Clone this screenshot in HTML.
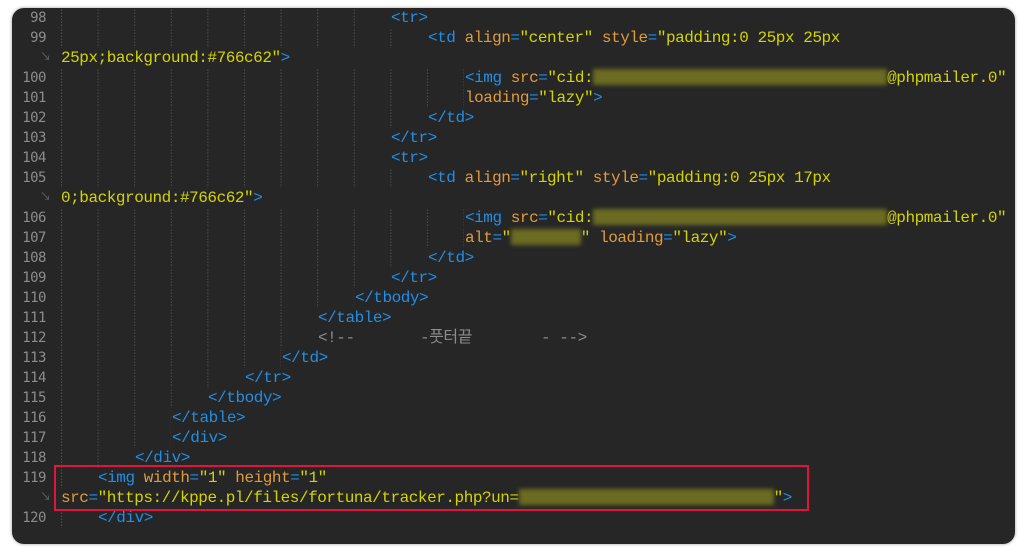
<!DOCTYPE html>
<html><head><meta charset="utf-8"><style>
html,body{margin:0;padding:0;background:#fff;width:1025px;height:551px;overflow:hidden}
.panel{position:absolute;left:12px;top:8px;width:1003px;height:536px;background:#262626;border-radius:12px;box-shadow:0 0 3px rgba(0,0,0,.4)}
.r{position:absolute;left:0;height:20px;line-height:20px;font-family:"Liberation Mono","Noto Sans CJK KR",monospace;font-size:16px;letter-spacing:-0.45px;white-space:pre;color:#d4d400}
.n{position:absolute;left:0;width:46px;text-align:right;color:#8c8c8c;font-family:"DejaVu Sans Mono",monospace;font-size:14px;letter-spacing:-0.5px}
.w{position:absolute;left:40px;color:#666;font-size:11px;letter-spacing:0}
.c{position:absolute;left:61px}
.g{position:absolute;left:61px;top:0;height:20px;background-image:linear-gradient(to bottom,#262626 50%,transparent 50%),linear-gradient(to right,#4e4e4e 1px,transparent 1px);background-size:100% 3px,36.6px 100%}
.t{color:#1f8fe8}.a{color:#e29a3a}.s{color:#d4d400}.m{color:#8c8c8c}
.b{display:inline-block;height:16px;vertical-align:-3px;background:#6b6b22;filter:blur(2px)}
.box{position:absolute;left:54px;top:465px;width:751px;height:42px;border:2px solid #e0143c}
</style></head><body>
<div class="panel"></div>

<div class="r" style="top:8px;width:1025px"><span class="n">98</span><div class="g" style="width:329px"></div><span class="c" style="left:391px"><span class="t">&lt;tr&gt;</span></span></div>
<div class="r" style="top:28px;width:1025px"><span class="n">99</span><div class="g" style="width:366px"></div><span class="c" style="left:428px"><span class="t">&lt;td </span><span class="a">align</span><span class="t">=</span>"center" <span class="a">style</span><span class="t">=</span>"padding:0 25px 25px</span></div>
<div class="r" style="top:48px;width:1025px"><span class="w">↘</span><span class="c">25px;background:#766c62"<span class="t">&gt;</span></span></div>
<div class="r" style="top:68px;width:1025px"><span class="n">100</span><div class="g" style="width:403px"></div><span class="c" style="left:465px"><span class="t">&lt;img </span><span class="a">src</span><span class="t">=</span>"cid:<span class="b" style="width:294px"></span>@phpmailer.0"</span></div>
<div class="r" style="top:88px;width:1025px"><span class="n">101</span><div class="g" style="width:403px"></div><span class="c" style="left:465px"><span class="a">loading</span><span class="t">=</span>"lazy"<span class="t">&gt;</span></span></div>
<div class="r" style="top:108px;width:1025px"><span class="n">102</span><div class="g" style="width:366px"></div><span class="c" style="left:428px"><span class="t">&lt;/td&gt;</span></span></div>
<div class="r" style="top:128px;width:1025px"><span class="n">103</span><div class="g" style="width:329px"></div><span class="c" style="left:391px"><span class="t">&lt;/tr&gt;</span></span></div>
<div class="r" style="top:148px;width:1025px"><span class="n">104</span><div class="g" style="width:329px"></div><span class="c" style="left:391px"><span class="t">&lt;tr&gt;</span></span></div>
<div class="r" style="top:168px;width:1025px"><span class="n">105</span><div class="g" style="width:366px"></div><span class="c" style="left:428px"><span class="t">&lt;td </span><span class="a">align</span><span class="t">=</span>"right" <span class="a">style</span><span class="t">=</span>"padding:0 25px 17px</span></div>
<div class="r" style="top:188px;width:1025px"><span class="w">↘</span><span class="c">0;background:#766c62"<span class="t">&gt;</span></span></div>
<div class="r" style="top:208px;width:1025px"><span class="n">106</span><div class="g" style="width:403px"></div><span class="c" style="left:465px"><span class="t">&lt;img </span><span class="a">src</span><span class="t">=</span>"cid:<span class="b" style="width:294px"></span>@phpmailer.0"</span></div>
<div class="r" style="top:228px;width:1025px"><span class="n">107</span><div class="g" style="width:403px"></div><span class="c" style="left:465px"><span class="a">alt</span><span class="t">=</span>"<span class="b" style="width:70px"></span>" <span class="a">loading</span><span class="t">=</span>"lazy"<span class="t">&gt;</span></span></div>
<div class="r" style="top:248px;width:1025px"><span class="n">108</span><div class="g" style="width:366px"></div><span class="c" style="left:428px"><span class="t">&lt;/td&gt;</span></span></div>
<div class="r" style="top:268px;width:1025px"><span class="n">109</span><div class="g" style="width:329px"></div><span class="c" style="left:391px"><span class="t">&lt;/tr&gt;</span></span></div>
<div class="r" style="top:288px;width:1025px"><span class="n">110</span><div class="g" style="width:293px"></div><span class="c" style="left:355px"><span class="t">&lt;/tbody&gt;</span></span></div>
<div class="r" style="top:308px;width:1025px"><span class="n">111</span><div class="g" style="width:256px"></div><span class="c" style="left:318px"><span class="t">&lt;/table&gt;</span></span></div>
<div class="r" style="top:328px;width:1025px"><span class="n">112</span><div class="g" style="width:256px"></div><span class="c m" style="left:318px">&lt;!--</span><span class="c m" style="left:420px">-풋터끝</span><span class="c m" style="left:541px">- --&gt;</span></div>
<div class="r" style="top:348px;width:1025px"><span class="n">113</span><div class="g" style="width:220px"></div><span class="c" style="left:282px"><span class="t">&lt;/td&gt;</span></span></div>
<div class="r" style="top:368px;width:1025px"><span class="n">114</span><div class="g" style="width:183px"></div><span class="c" style="left:245px"><span class="t">&lt;/tr&gt;</span></span></div>
<div class="r" style="top:388px;width:1025px"><span class="n">115</span><div class="g" style="width:146px"></div><span class="c" style="left:208px"><span class="t">&lt;/tbody&gt;</span></span></div>
<div class="r" style="top:408px;width:1025px"><span class="n">116</span><div class="g" style="width:110px"></div><span class="c" style="left:172px"><span class="t">&lt;/table&gt;</span></span></div>
<div class="r" style="top:428px;width:1025px"><span class="n">117</span><div class="g" style="width:110px"></div><span class="c" style="left:172px"><span class="t">&lt;/div&gt;</span></span></div>
<div class="r" style="top:448px;width:1025px"><span class="n">118</span><div class="g" style="width:73px"></div><span class="c" style="left:135px"><span class="t">&lt;/div&gt;</span></span></div>
<div class="r" style="top:468px;width:1025px"><span class="n">119</span><div class="g" style="width:37px"></div><span class="c" style="left:98px"><span class="t">&lt;img </span><span class="a">width</span><span class="t">=</span>"1" <span class="a">height</span><span class="t">=</span>"1"</span></div>
<div class="r" style="top:488px;width:1025px"><span class="w">↘</span><span class="c"><span class="a">src</span><span class="t">=</span>"https://kppe.pl/files/fortuna/tracker.php?un=<span class="b" style="width:255px"></span>"<span class="t">&gt;</span></span></div>
<div class="r" style="top:508px;width:1025px"><span class="n">120</span><div class="g" style="width:37px"></div><span class="c" style="left:98px"><span class="t">&lt;/div&gt;</span></span></div>
<div class="box"></div>
</body></html>
